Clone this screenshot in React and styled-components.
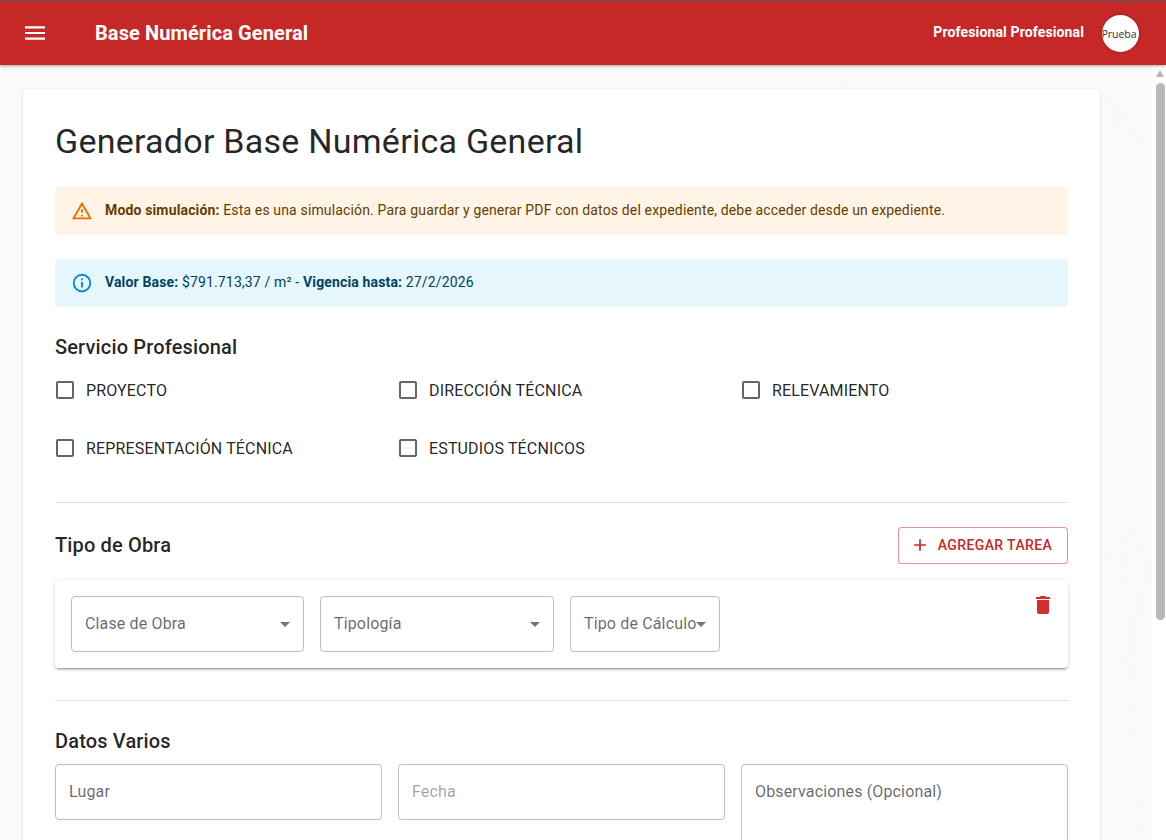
import React from "react";
import styled, { createGlobalStyle } from "styled-components";

const GlobalStyle = createGlobalStyle`
  html, body, #root {
    margin: 0;
    height: 100%;
    overflow: hidden;
  }
  body {
    font-family: Roboto, "Liberation Sans", sans-serif;
    color: rgba(0, 0, 0, 0.87);
    background: #fafafa;
  }
`;

const Page = styled.div`
  height: 100vh;
  display: flex;
  flex-direction: column;
`;

const AppBar = styled.header`
  flex: 0 0 65px;
  box-sizing: border-box;
  display: flex;
  align-items: center;
  padding: 0 27px 0 25px;
  background: #c62828;
  border-top: 1px solid #5c5c5c;
  box-shadow: 0 1px 3px rgba(0, 0, 0, 0.35);
  color: #fff;
  position: relative;
  z-index: 2;
`;

const MenuButton = styled.svg`
  width: 20px;
  height: 20px;
  fill: currentColor;
  margin-right: 50px;
`;

const AppTitle = styled.div`
  flex: 1;
  padding-bottom: 1px;
  font-size: 20px;
  font-weight: 700;
  letter-spacing: 0.1px;
`;

const UserName = styled.div`
  padding-bottom: 3px;
  margin-right: 18px;
  font-size: 14px;
  font-weight: 700;
  letter-spacing: 0.13px;
`;

const Avatar = styled.div`
  width: 37px;
  height: 37px;
  margin-top: 1px;
  padding-right: 3px;
  box-sizing: border-box;
  border-radius: 50%;
  background: #fff;
  box-shadow: 0 0 3px rgba(0, 0, 0, 0.35);
  display: flex;
  align-items: center;
  justify-content: center;
  overflow: hidden;
  color: #333;
  font-family: "Open Sans", sans-serif;
  font-size: 10.5px;
  white-space: nowrap;
`;

const Main = styled.main`
  flex: 1;
  min-height: 0;
  display: flex;
`;

const ContentArea = styled.div`
  flex: 1;
  min-width: 0;
  position: relative;
`;

const Backdrop = styled.svg`
  position: absolute;
  inset: 0;
  width: 100%;
  height: 100%;
  fill: none;
  stroke: #f6f6f6;
  stroke-width: 1;
`;

const Scroller = styled.div`
  position: relative;
  height: 100%;
  overflow: hidden;
  box-sizing: border-box;
  padding: 24px 52px 0 23px;
`;

const ScrollRail = styled.div`
  flex: 0 0 14px;
  box-sizing: border-box;
  display: flex;
  flex-direction: column;
  padding: 5px 1px 0 4px;
  background: #fff;
`;

const ScrollArrow = styled.div`
  width: 0;
  height: 0;
  margin-bottom: 6px;
  border-left: 4.5px solid transparent;
  border-right: 4.5px solid transparent;
  border-bottom: 7px solid #b9b9b9;
`;

const ScrollThumb = styled.div`
  height: 537px;
  background: #b9b9b9;
  border-radius: 5px;
`;

const Card = styled.section`
  box-sizing: border-box;
  padding: 32px;
  background: #fff;
  border-radius: 4px;
  box-shadow: 0 1px 3px rgba(0, 0, 0, 0.12), 0 0 2px rgba(0, 0, 0, 0.06);
`;

const PageTitle = styled.h1`
  margin: 0 0 26px;
  font-size: 34px;
  line-height: 40px;
  font-weight: 400;
  letter-spacing: 0.25px;
`;

const Alert = styled.div`
  height: 48px;
  box-sizing: border-box;
  display: flex;
  align-items: center;
  gap: 12px;
  padding: 0 16px;
  margin-bottom: 24px;
  border-radius: 4px;
  font-size: 14px;
  letter-spacing: 0.15px;
  background: ${(p) => (p.$kind === "warning" ? "#fff4e5" : "#e5f6fd")};
  color: ${(p) => (p.$kind === "warning" ? "#663c00" : "#014361")};

  svg {
    width: 22px;
    height: 22px;
    fill: ${(p) => (p.$kind === "warning" ? "#ed6c02" : "#0288d1")};
    flex: none;
  }
  span {
    margin-bottom: 2px;
  }
  b {
    font-weight: 700;
  }
`;

const SectionTitle = styled.h2`
  margin: 0;
  font-size: 20px;
  line-height: 32px;
  font-weight: 500;
  letter-spacing: 0.15px;
`;

const CheckGrid = styled.div`
  display: grid;
  grid-template-columns: repeat(3, 327px);
  column-gap: 16px;
  row-gap: 16px;
  margin-top: 6px;
`;

const CheckItem = styled.label`
  height: 42px;
  display: flex;
  align-items: center;
  gap: 9px;
  font-size: 16px;
  letter-spacing: 0.15px;

  svg {
    width: 24px;
    height: 24px;
    margin-left: -2px;
    fill: rgba(0, 0, 0, 0.6);
  }
`;

const Divider = styled.hr`
  margin: ${(p) => p.$top}px 0 ${(p) => p.$bottom}px;
  border: 0;
  border-top: 1px solid #e0e0e0;
`;

const SectionHeader = styled.div`
  display: flex;
  align-items: center;
  justify-content: space-between;
  margin-bottom: 16px;

  h2 {
    margin-bottom: 2px;
  }
`;

const AddButton = styled.button`
  width: 170px;
  height: 37px;
  display: flex;
  align-items: center;
  justify-content: center;
  gap: 8px;
  padding: 0 4px 2px 0;
  background: #fff;
  border: 1px solid rgba(198, 40, 40, 0.5);
  border-radius: 4px;
  color: #c62828;
  font-family: inherit;
  font-size: 14px;
  font-weight: 500;
  letter-spacing: 0.4px;
  text-transform: uppercase;

  svg {
    width: 20px;
    height: 20px;
    fill: currentColor;
  }
`;

const TaskCard = styled.div`
  display: flex;
  justify-content: space-between;
  align-items: flex-start;
  padding: 16px 13px 16px 16px;
  border-radius: 4px;
  box-shadow: 0 3px 1px -2px rgba(0, 0, 0, 0.2), 0 2px 2px rgba(0, 0, 0, 0.14), 0 1px 5px rgba(0, 0, 0, 0.12);
`;

const SelectRow = styled.div`
  display: flex;
  gap: 16px;
`;

const Field = styled.div`
  position: relative;
  flex: none;
  width: ${(p) => p.$width || 327}px;
  height: ${(p) => p.$height || 56}px;
  box-sizing: border-box;
  padding: 16px 13px;
  border: 1px solid rgba(0, 0, 0, 0.25);
  border-radius: 4px;
  font-size: 16px;
  line-height: 21px;
  letter-spacing: 0.15px;
  white-space: nowrap;
  color: ${(p) => (p.$muted ? "rgba(0, 0, 0, 0.38)" : "rgba(0, 0, 0, 0.6)")};
`;

const CaretIcon = styled.svg`
  position: absolute;
  top: 15px;
  right: 6px;
  width: 24px;
  height: 24px;
  fill: rgba(0, 0, 0, 0.54);
`;

const DeleteIcon = styled.svg`
  width: 24px;
  height: 24px;
  margin-top: -3px;
  fill: #d32f2f;
`;

const DataRow = styled.div`
  display: flex;
  align-items: flex-start;
  gap: 16px;
  margin-top: 7px;
  padding-bottom: 32px;
`;

const services = [
  "PROYECTO",
  "DIRECCIÓN TÉCNICA",
  "RELEVAMIENTO",
  "REPRESENTACIÓN TÉCNICA",
  "ESTUDIOS TÉCNICOS",
];

const Caret = () => (
  <CaretIcon viewBox="0 0 24 24">
    <path d="M7 10l5 5 5-5z" />
  </CaretIcon>
);

export default function App() {
  return (
    <Page>
      <GlobalStyle />
      <AppBar>
        <MenuButton viewBox="3 3 18 18">
          <path d="M3 18h18v-2H3v2zm0-5h18v-2H3v2zm0-7v2h18V6H3z" />
        </MenuButton>
        <AppTitle>Base Numérica General</AppTitle>
        <UserName>Profesional Profesional</UserName>
        <Avatar>Prueba</Avatar>
      </AppBar>
      <Main>
        <ContentArea>
          <Backdrop viewBox="0 0 1152 775" preserveAspectRatio="none">
            <path d="M1105 30L1150 90M1125 0L1105 110M1100 60L1152 40" />
            <path d="M1118 440L1150 500L1125 600M1100 500L1125 470L1140 775" />
            <path d="M0 250L23 225M0 290L23 270M0 640L23 620M0 680L23 665" />
            <path d="M280 0L300 24M860 0L840 24" />
          </Backdrop>
          <Scroller>
            <Card>
              <PageTitle>Generador Base Numérica General</PageTitle>
              <Alert $kind="warning">
                <svg viewBox="0 0 24 24">
                  <path d="M12 5.99L19.53 19H4.47L12 5.99M12 2L1 21h22L12 2zm1 14h-2v2h2v-2zm0-6h-2v4h2v-4z" />
                </svg>
                <span>
                  <b>Modo simulación:</b> Esta es una simulación. Para guardar y generar PDF con datos del expediente,
                  debe acceder desde un expediente.
                </span>
              </Alert>
              <Alert $kind="info">
                <svg viewBox="0 0 24 24">
                  <path d="M11 9h2V7h-2v2zm1 11c-4.41 0-8-3.59-8-8s3.59-8 8-8 8 3.59 8 8-3.59 8-8 8zm0-18a10 10 0 100 20 10 10 0 000-20zm-1 15h2v-6h-2v6z" />
                </svg>
                <span>
                  <b>Valor Base:</b> $791.713,37 / m² - <b>Vigencia hasta:</b> 27/2/2026
                </span>
              </Alert>

              <SectionTitle>Servicio Profesional</SectionTitle>
              <CheckGrid>
                {services.map((name) => (
                  <CheckItem key={name}>
                    <svg viewBox="0 0 24 24">
                      <path d="M19 5v14H5V5h14m0-2H5c-1.1 0-2 .9-2 2v14c0 1.1.9 2 2 2h14c1.1 0 2-.9 2-2V5c0-1.1-.9-2-2-2z" />
                    </svg>
                    {name}
                  </CheckItem>
                ))}
              </CheckGrid>

              <Divider $top={33} $bottom={24} />

              <SectionHeader>
                <SectionTitle>Tipo de Obra</SectionTitle>
                <AddButton>
                  <svg viewBox="0 0 24 24">
                    <path d="M19 13h-6v6h-2v-6H5v-2h6V5h2v6h6v2z" />
                  </svg>
                  Agregar Tarea
                </AddButton>
              </SectionHeader>
              <TaskCard>
                <SelectRow>
                  <Field $width={233}>
                    Clase de Obra
                    <Caret />
                  </Field>
                  <Field $width={234}>
                    Tipología
                    <Caret />
                  </Field>
                  <Field $width={150}>
                    Tipo de Cálculo
                    <Caret />
                  </Field>
                </SelectRow>
                <DeleteIcon viewBox="0 0 24 24">
                  <path d="M6 19c0 1.1.9 2 2 2h8c1.1 0 2-.9 2-2V7H6v12zM19 4h-3.5l-1-1h-5l-1 1H5v2h14V4z" />
                </DeleteIcon>
              </TaskCard>

              <Divider $top={32} $bottom={24} />

              <SectionTitle>Datos Varios</SectionTitle>
              <DataRow>
                <Field>Lugar</Field>
                <Field $muted>Fecha</Field>
                <Field $height={120}>Observaciones (Opcional)</Field>
              </DataRow>
            </Card>
          </Scroller>
        </ContentArea>
        <ScrollRail>
          <ScrollArrow />
          <ScrollThumb />
        </ScrollRail>
      </Main>
    </Page>
  );
}
